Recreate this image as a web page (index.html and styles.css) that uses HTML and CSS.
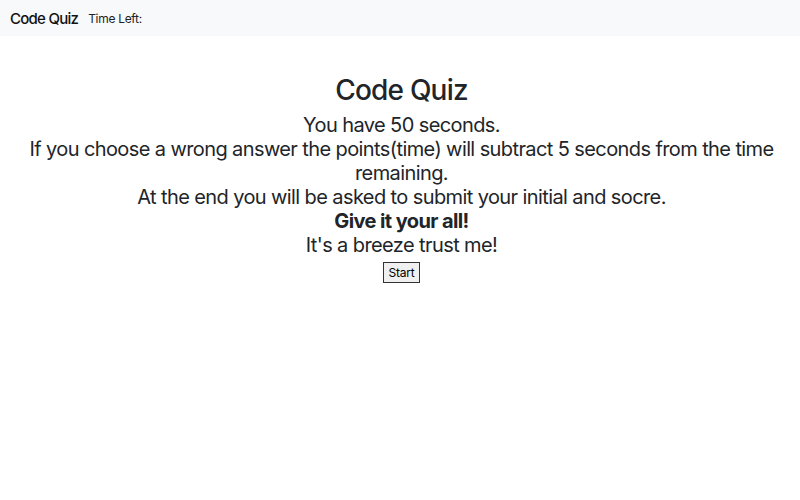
FILE: index.html
```html
<!DOCTYPE html>
<html>
<head>
<meta charset="utf-8">
<link rel="stylesheet" href="styles.css">
</head>
<body>
<nav class="navbar">
  <span class="brand">Code Quiz</span>
  <span class="timer">Time Left:</span>
</nav>
<main class="intro">
  <h1 class="title">Code Quiz</h1>
  <p class="line">You have 50 seconds.</p>
  <p class="line">If you choose a wrong answer the points(time) will subtract 5 seconds from the time remaining.</p>
  <p class="line">At the end you will be asked to submit your initial and socre.</p>
  <p class="line strong">Give it your all!</p>
  <p class="line">It's a breeze trust me!</p>
  <button class="start">Start</button>
</main>
</body>
</html>
```
FILE: styles.css
```css
html, body {
  margin: 0;
  padding: 0;
  background: #fff;
  color: #212529;
  font-family: Inter, "Noto Sans", sans-serif;
}
.navbar {
  display: flex;
  align-items: center;
  height: 36px;
  background: #f8f9fa;
  padding: 0 10px;
  gap: 10px;
}
.brand {
  font-size: 15px;
  font-weight: 500;
  letter-spacing: -0.75px;
  color: #111;
}
.timer {
  font-size: 12px;
  letter-spacing: -0.3px;
  color: #222;
}
.intro {
  display: flex;
  flex-direction: column;
  align-items: center;
  text-align: center;
  padding: 36px 0 0 3px;
}
.title {
  margin: 0 0 5px;
  font-size: 28px;
  font-weight: 500;
  line-height: 36px;
  letter-spacing: -0.8px;
}
.line {
  margin: 0;
  font-size: 20px;
  line-height: 24px;
  letter-spacing: -0.6px;
  max-width: 790px;
}
.strong {
  font-weight: 700;
}
.start {
  margin-top: 5px;
  font-family: Inter, sans-serif;
  font-size: 12px;
  letter-spacing: -0.2px;
  padding: 2px 4px;
  border: 1px solid #333;
  background: #f0f0f0;
  color: #000;
  border-radius: 0;
}
```
